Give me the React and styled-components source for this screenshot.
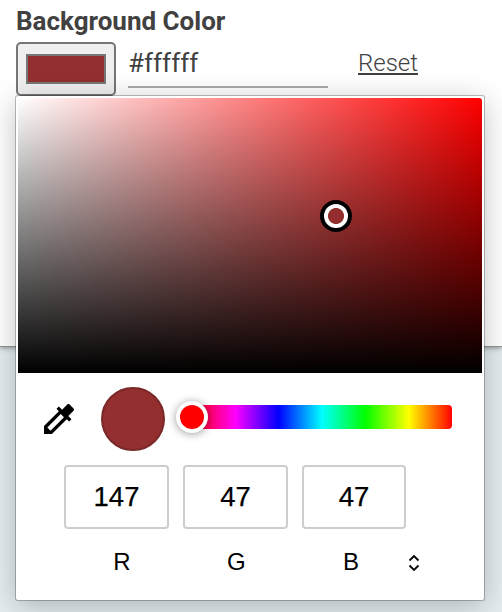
import React from "react";
import styled, { createGlobalStyle } from "styled-components";

const Global = createGlobalStyle`
  *, *::before, *::after { box-sizing: border-box; }
  body { margin: 0; overflow: hidden; }
`;

const Page = styled.div`
  position: relative;
  width: 502px;
  height: 612px;
  overflow: hidden;
  background: #e5edf1;
  font-family: Roboto, sans-serif;
  color: #414141;
`;

const Panel = styled.section`
  height: 347px;
  padding: 6px 16px 0;
  background: #fff;
  border-bottom: 1px solid #929597;
  box-shadow: 0 1px 5px rgba(0, 0, 0, 0.4);
`;

const Title = styled.h2`
  margin: 0;
  height: 36px;
  font-size: 26px;
  line-height: 30px;
  font-weight: 700;
  white-space: nowrap;
`;

const Field = styled.div`
  display: flex;
  align-items: flex-start;
`;

const ColorButton = styled.button`
  display: flex;
  width: 100px;
  height: 54px;
  padding: 10px 8px;
  border: 2px solid #767676;
  border-radius: 5px;
  background: #efefef;
`;

const ColorFill = styled.span`
  flex: 1;
  border: 2px solid #777;
  background: #932f2f;
`;

const HexInput = styled.input`
  width: 200px;
  height: 46px;
  margin-left: 12px;
  padding: 0 0 2px;
  border: 0;
  border-bottom: 2px solid #a9a9a9;
  outline: 0;
  background: transparent;
  font: 400 26px Roboto, sans-serif;
  color: #414141;
`;

const Reset = styled.a`
  margin: 6px 0 0 30px;
  font-size: 24px;
  line-height: 30px;
  font-weight: 300;
  text-decoration: underline;
  text-decoration-thickness: 2px;
  text-underline-offset: 2px;
  text-decoration-skip-ink: none;
`;

const Picker = styled.div`
  position: absolute;
  left: 16px;
  top: 96px;
  width: 468px;
  height: 504px;
  padding: 2px;
  background: #fff;
  border-radius: 2px;
  box-shadow: 0 0 0 1px rgba(0, 0, 0, 0.25), 0 6px 30px rgba(0, 0, 0, 0.25);
  font-family: "Liberation Sans", Arial, sans-serif;
  color: #000;
`;

const Spectrum = styled.div`
  position: relative;
  height: 275px;
  border-radius: 0 3px 0 0;
  background: linear-gradient(to bottom, transparent, #000),
    linear-gradient(to right, #fff, #f00);
`;

const SpectrumThumb = styled.div`
  position: absolute;
  left: 302px;
  top: 102px;
  width: 32px;
  height: 32px;
  border: 4px solid #000;
  border-radius: 50%;
  background: radial-gradient(circle, #932f2f 7.6px, #fff 8.4px);
`;

const Controls = styled.div`
  display: flex;
  height: 92px;
  padding: 14px 0 0 21px;
`;

const Dropper = styled.svg`
  width: 40px;
  height: 40px;
  margin-top: 12px;
`;

const Swatch = styled.div`
  width: 64px;
  height: 64px;
  margin-left: 22px;
  border: 2px solid #792829;
  border-radius: 50%;
  background: #932f2f;
`;

const Hue = styled.div`
  position: relative;
  width: 260px;
  height: 24px;
  margin: 18px 0 0 27px;
  border-radius: 4px;
  background: linear-gradient(to right, #f00, #f0f, #00f, #0ff, #0f0, #ff0, #f00);
`;

const HueThumb = styled.div`
  position: absolute;
  left: -16px;
  top: -4px;
  width: 32px;
  height: 32px;
  border: 4px solid #fff;
  border-radius: 50%;
  background: #f00;
  box-shadow: 0 1px 8px rgba(0, 0, 0, 0.4);
`;

const Channels = styled.div`
  display: grid;
  grid-template-columns: 105px 105px 104px;
  column-gap: 14px;
  margin-left: 46px;
`;

const ChannelInput = styled.input`
  width: 100%;
  height: 64px;
  padding: 0;
  border: 2px solid #cdcdcd;
  border-radius: 4px;
  outline: 0;
  background: #fff;
  font: 27.5px "Liberation Sans", Arial, sans-serif;
  -webkit-text-stroke: 0.25px #000;
  text-align: center;
  color: #000;
`;

const Labels = styled.div`
  display: flex;
  align-items: center;
  height: 28px;
  margin: 19px 0 0 46px;
`;

const Label = styled.span`
  width: 114.6px;
  padding-left: 1px;
  font-size: 24px;
  line-height: 28px;
  text-align: center;
`;

const FormatArrows = styled.svg`
  width: 12px;
  height: 18px;
  margin-top: 1px;
`;

const channels = [
  { name: "R", value: "147" },
  { name: "G", value: "47" },
  { name: "B", value: "47" },
];

export default function App() {
  return (
    <Page>
      <Global />
      <Panel>
        <Title>Background Color</Title>
        <Field>
          <ColorButton aria-label="Choose color">
            <ColorFill />
          </ColorButton>
          <HexInput defaultValue="#ffffff" aria-label="Hex" />
          <Reset>Reset</Reset>
        </Field>
      </Panel>
      <Picker>
        <Spectrum>
          <SpectrumThumb />
        </Spectrum>
        <Controls>
          <Dropper viewBox="0 0 24 24">
            <path d="M20.71 5.63l-2.34-2.34c-.39-.39-1.02-.39-1.41 0l-3.12 3.12-1.93-1.91-1.41 1.41 1.42 1.42L3 16.25V21h4.75l8.92-8.92 1.42 1.42 1.41-1.41-1.92-1.92 3.12-3.12c.4-.4.4-1.03.01-1.42zM6.92 19L5 17.08l8.06-8.06 1.92 1.92L6.92 19z" />
          </Dropper>
          <Swatch />
          <Hue>
            <HueThumb />
          </Hue>
        </Controls>
        <Channels>
          {channels.map((c) => (
            <ChannelInput key={c.name} defaultValue={c.value} aria-label={c.name} />
          ))}
        </Channels>
        <Labels>
          {channels.map((c) => (
            <Label key={c.name}>{c.name}</Label>
          ))}
          <FormatArrows viewBox="0 0 12 18" fill="none" stroke="#000" strokeWidth="1.8">
            <path d="M1.500 6.500L6 2l4.500 4.500M1.500 11.500L6 16l4.500-4.500" />
          </FormatArrows>
        </Labels>
      </Picker>
    </Page>
  );
}
